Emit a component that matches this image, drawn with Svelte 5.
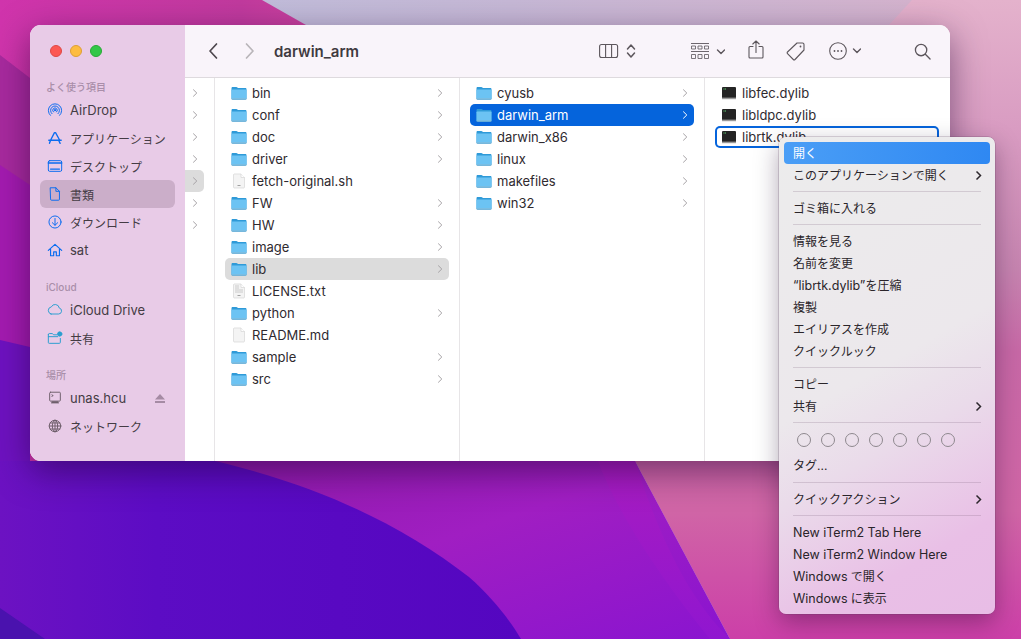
<script>
  const favs = [
    { label: 'AirDrop', icon: 'airdrop', lat: true },
    { label: 'アプリケーション', icon: 'apps' },
    { label: 'デスクトップ', icon: 'desktop' },
    { label: '書類', icon: 'doc', active: true },
    { label: 'ダウンロード', icon: 'download' },
    { label: 'sat', icon: 'home', lat: true }
  ];
  const col1 = [
    ['bin', 'f'], ['conf', 'f'], ['doc', 'f'], ['driver', 'f'], ['fetch-original.sh', 's'], ['FW', 'f'], ['HW', 'f'],
    ['image', 'f'], ['lib', 'f', 'sel'], ['LICENSE.txt', 't'], ['python', 'f'], ['README.md', 'd'], ['sample', 'f'], ['src', 'f']
  ];
  const col2 = [['cyusb', 'f'], ['darwin_arm', 'f', 'on'], ['darwin_x86', 'f'], ['linux', 'f'], ['makefiles', 'f'], ['win32', 'f']];
  const col3 = ['libfec.dylib', 'libldpc.dylib', 'librtk.dylib'];
  const sections = [
    [{ t: '開く', hi: true }, { t: 'このアプリケーションで開く', sub: true }],
    [{ t: 'ゴミ箱に入れる' }],
    [{ t: '情報を見る' }, { t: '名前を変更' }, { l: '“librtk.dylib”', t: 'を圧縮' }, { t: '複製' }, { t: 'エイリアスを作成' }, { t: 'クイックルック' }],
    [{ t: 'コピー' }, { t: '共有', sub: true }]
  ];
  const sections2 = [
    [{ t: 'クイックアクション', sub: true }],
    [{ l: 'New iTerm2 Tab Here' }, { l: 'New iTerm2 Window Here' }, { l: 'Windows', t: ' で開く' }, { l: 'Windows', t: ' に表示' }]
  ];
  const tags = [0, 1, 2, 3, 4, 5, 6];
  const stubs = [0, 1, 2, 3, 4, 5, 6];
</script>

{#snippet folder()}
  <svg class="ficon" viewBox="0 0 16 16"><path d="M.5 3.2c0-.7.5-1.2 1.2-1.2h3.6c.5 0 .8.2 1.1.5l.6.6h7.3c.7 0 1.2.5 1.2 1.2v9.2c0 .7-.5 1.2-1.2 1.2H1.7c-.7 0-1.2-.5-1.2-1.2z" fill="#2f9ad8"/><path d="M.5 5.2c0-.4.3-.7.7-.7h13.6c.4 0 .7.3.7.7v8.1c0 .7-.5 1.2-1.2 1.2H1.7c-.7 0-1.2-.5-1.2-1.2z" fill="#6cc3f3"/><path d="M.5 14h15" stroke="#8fb3c8" stroke-width=".8"/></svg>
{/snippet}

{#snippet sheet(kind)}
  <svg class="ficon" viewBox="0 0 16 16"><path d="M3 1h7l3.5 3.5V14a1 1 0 0 1-1 1h-9a1 1 0 0 1-1-1V2a1 1 0 0 1 .5-1z" fill="#f4f4f4" stroke="#d6d6d6" stroke-width=".7"/><path d="M10 1v3.5h3.5" fill="#fff" stroke="#d6d6d6" stroke-width=".7"/>{#if kind === 's' || kind === 't'}<path d="M6.5 12.5h3" stroke="#8c8c8c" stroke-width=".8"/>{/if}{#if kind === 't'}<path d="M4 3h4M4 5h4M4 7h8M4 9h8" stroke="#c2c2c2" stroke-width=".8"/>{/if}</svg>
{/snippet}

{#snippet exec()}
  <svg class="ficon" viewBox="0 0 16 16"><rect x="1" y="2" width="14" height="12" rx="1" fill="#242424"/><rect x="1" y="12.6" width="14" height="1.6" fill="#9a9a9a"/><path d="M2.5 4h3" stroke="#5fce72" stroke-width="1" stroke-dasharray="1 .5"/></svg>
{/snippet}

{#snippet chev()}
  <svg class="chev" viewBox="0 0 6 10"><path d="M1.2 1.5 4.8 5 1.2 8.5" fill="none" stroke="currentColor" stroke-width="1"/></svg>
{/snippet}

{#snippet side(name)}
  <svg class="sicon" viewBox="0 0 18 18" fill="none" stroke={name === 'cloud' || name === 'share' ? '#2b9fd0' : name === 'server' || name === 'net' ? '#6f5f6c' : '#0a6cf0'} stroke-width="1.1" stroke-linecap="round" stroke-linejoin="round">
    {#if name === 'airdrop'}
      <path d="M5.6 13.2a5 5 0 1 1 6.8 0M3.8 15a7.5 7.5 0 1 1 10.4 0M7.2 11.2a2.6 2.6 0 1 1 3.6 0"/><circle cx="9" cy="9.2" r=".8" fill="#0a6cf0"/>
    {:else if name === 'apps'}
      <path d="M9.6 3 14 11M8.4 3 4 11.5 2.8 15M2 11.5h14M13 11.5l1.8 3.5" stroke-width="1.5"/>
    {:else if name === 'desktop'}
      <rect x="1.5" y="3" width="15" height="12" rx="1.5"/><path d="M1.5 5.6h15" stroke-width="1.6"/><path d="M4 12.5h10" stroke-width="1.6"/>
    {:else if name === 'doc'}
      <path d="M4 2h6l4 4v9a1 1 0 0 1-1 1H5a1 1 0 0 1-1-1zM10 2v4h4"/>
    {:else if name === 'download'}
      <circle cx="9" cy="9" r="6.8"/><path d="M9 5v7.5M6 9.8l3 2.9 3-2.9"/>
    {:else if name === 'home'}
      <path d="M1.5 9.5 9 2.6l7.5 6.9M4 7.8V15.5h3.5v-4.4h3v4.4H14V7.8" stroke-width="1.3"/>
    {:else if name === 'cloud'}
      <path d="M5 14.5h8.5a3.4 3.4 0 0 0 .8-6.7 4.7 4.7 0 0 0-8.9-1.3A4.1 4.1 0 0 0 5 14.5z" transform="translate(-.5 -1)"/>
    {:else if name === 'share'}
      <path d="M1.5 5a1 1 0 0 1 1-1h3.6l1.2 1.4h4M1.5 7.5h10.5M1.5 5v9a1 1 0 0 0 1 1h11.5a1 1 0 0 0 1-1V9.5"/><circle cx="14.3" cy="4.5" r="2.4" fill="#2b9fd0"/>
    {:else if name === 'server'}
      <rect x="3" y="2.5" width="12" height="10" rx="1"/><path d="M5.5 5.5l1.5.8-1.5.8M5 14.5h8" /><path d="M6 13.6h6" stroke-width="2"/>
    {:else}
      <circle cx="9" cy="9" r="6.5"/><ellipse cx="9" cy="9" rx="3" ry="6.5"/><path d="M2.5 9h13M3.5 5.6h11M3.5 12.4h11M9 2.5v13"/>
    {/if}
  </svg>
{/snippet}

{#snippet item(m)}
  <div class="mi" class:hi={m.hi} class:plain={m.l && !m.t}>
    <span>{#if m.l}<span class="lat">{m.l}</span>{/if}{m.t ?? ''}</span>
    {#if m.sub}<svg class="sub" viewBox="0 0 7 11"><path d="M1.5 1.5 5.5 5.5l-4 4" fill="none" stroke="#2c272c" stroke-width="1.5"/></svg>{/if}
  </div>
{/snippet}

<main class="desktop">
  <svg class="wall" viewBox="0 0 1021 639" preserveAspectRatio="none">
    <defs>
      <linearGradient id="lav" x1="0" y1="0" x2="1" y2="0"><stop offset="0" stop-color="#bcc0de"/><stop offset=".5" stop-color="#c6b8d6"/><stop offset="1" stop-color="#d8b2cc"/></linearGradient>
      <linearGradient id="mag" x1="0" y1="0" x2="1" y2="0"><stop offset="0" stop-color="#d034ac"/><stop offset=".6" stop-color="#c13a9e"/><stop offset="1" stop-color="#d4489c"/></linearGradient>
      <linearGradient id="mid" x1="0" y1="0" x2="1" y2="1"><stop offset="0" stop-color="#8e1aa8"/><stop offset=".45" stop-color="#a01ec2"/><stop offset="1" stop-color="#8a14d0"/></linearGradient>
      <linearGradient id="deep" x1="0" y1="0" x2="1" y2="0"><stop offset="0" stop-color="#6c12c2"/><stop offset=".3" stop-color="#5c0cc4"/><stop offset="1" stop-color="#5406c0"/></linearGradient>
      <linearGradient id="strip" x1="0" y1="0" x2="0" y2="1"><stop offset="0" stop-color="#a81cc0"/><stop offset="1" stop-color="#9016d0"/></linearGradient>
      <linearGradient id="pink" x1="0" y1="0" x2="0" y2="1"><stop offset="0" stop-color="#e4b2cc"/><stop offset=".2" stop-color="#d99cc2"/><stop offset=".42" stop-color="#c684b0"/><stop offset=".55" stop-color="#c768a6"/><stop offset=".8" stop-color="#d065a6"/><stop offset="1" stop-color="#cc3fa8"/></linearGradient>
    </defs>
    <rect width="1021" height="639" fill="url(#lav)"/>
    <path d="M0 0H262L306 25 400 140V461H0z" fill="url(#mag)"/>
    <path d="M0 55 30 78V461H0z" fill="#a82a9e"/>
    <path d="M0 165 30 185V461H0z" fill="#a41bb0"/>
    <path d="M0 340 30 347V461H0z" fill="#6e12c0"/>
    <path d="M912 0 889 25 635 461 730 639H1021V0z" fill="url(#pink)"/>
    <path d="M200 461H635L730 639H500z" fill="url(#mid)"/>
    <path d="M598 461H635C660 540 690 600 730 639H710C670 590 620 520 598 461z" fill="url(#strip)"/>
    <path d="M0 461H215C325 487 404 527 469 577 490 595 510 620 521 639H0z" fill="url(#deep)"/>
    <path d="M0 608 45 639H0z" fill="#4a12ae"/>
  </svg>

  <div class="window">
    <aside class="sidebar">
      <div class="lights">
        <span class="dot r"></span><span class="dot y"></span><span class="dot g"></span>
      </div>
      <div class="slabel first">よく使う項目</div>
      {#each favs as f}
        <div class="sitem" class:active={f.active} class:latin={f.lat}>{@render side(f.icon)}<span>{f.label}</span></div>
      {/each}
      <div class="slabel">iCloud</div>
      <div class="sitem latin">{@render side('cloud')}<span>iCloud Drive</span></div>
      <div class="sitem">{@render side('share')}<span>共有</span></div>
      <div class="slabel">場所</div>
      <div class="sitem latin">{@render side('server')}<span>unas.hcu</span>
        <svg class="eject" viewBox="0 0 10 9"><path d="M5 0 10 5.5H0zM0 7h10v2H0z" fill="#a58ba4"/></svg>
      </div>
      <div class="sitem">{@render side('net')}<span>ネットワーク</span></div>
    </aside>

    <section class="content">
      <header class="toolbar">
        <svg class="nav" viewBox="0 0 12 18"><path d="M9.5 2 3 9l6.5 7" fill="none" stroke="#4d474d" stroke-width="1.7" stroke-linecap="round" stroke-linejoin="round"/></svg>
        <svg class="nav dim" viewBox="0 0 12 18"><path d="M2.5 2 9 9l-6.5 7" fill="none" stroke="#b9b5b9" stroke-width="1.7" stroke-linecap="round" stroke-linejoin="round"/></svg>
        <h1>darwin_arm</h1>
        <div class="tools">
          <svg class="view" viewBox="0 0 37 16" fill="none" stroke="#5c565c" stroke-width="1.1"><rect x=".6" y="1.5" width="18" height="13" rx="2"/><path d="M6.6 1.5v13M12.6 1.5v13"/><path d="M28.5 6l3.5-4 3.5 4M28.5 10l3.5 4 3.5-4" stroke-width="1.5" stroke-linecap="round" stroke-linejoin="round"/></svg>
          <svg class="group" viewBox="0 0 34 17" fill="none" stroke="#5c565c"><path d="M0 .5h18M0 8.5h18" stroke-width=".9"/><path d="M.5 3h4v3h-4zM7 3h4v3H7zM13.5 3h4v3h-4zM.5 11.5h4v4h-4zM7 11.5h4v4H7zM13.5 11.5h4v4h-4z" stroke-width=".8"/><path d="M26.5 7l3.500 3.500 3.500-3.500" stroke-width="1.4" stroke-linecap="round" stroke-linejoin="round"/></svg>
          <svg class="share" viewBox="0 0 16 19" fill="none" stroke="#5c565c" stroke-width="1.1" stroke-linecap="round" stroke-linejoin="round"><path d="M5 6.500H2a1 1 0 0 0-1 1V17a1 1 0 0 0 1 1h12a1 1 0 0 0 1-1V7.500a1 1 0 0 0-1-1h-3M8 12.500V1M4.800 4 8 1l3.200 3"/></svg>
          <svg class="tag" viewBox="0 0 20 20" fill="none" stroke="#5c565c" stroke-width="1.1" stroke-linejoin="round"><path d="M11 2h5.500A1.500 1.500 0 0 1 18 3.500V9l-9 9.500a1.200 1.200 0 0 1-1.700 0l-5.800-5.800a1.200 1.200 0 0 1 0-1.700z"/><circle cx="14.500" cy="5.500" r=".9" fill="#5c565c" stroke="none"/></svg>
          <svg class="more" viewBox="0 0 32 18" fill="none" stroke="#5c565c" stroke-width="1.1"><circle cx="9" cy="9" r="8.300"/><circle cx="5.500" cy="9" r=".9" fill="#5c565c" stroke="none"/><circle cx="9" cy="9" r=".9" fill="#5c565c" stroke="none"/><circle cx="12.500" cy="9" r=".9" fill="#5c565c" stroke="none"/><path d="M24.500 7l3.500 3.500L31.500 7" stroke-width="1.4" stroke-linecap="round" stroke-linejoin="round"/></svg>
          <svg class="search" viewBox="0 0 18 18" fill="none" stroke="#5c565c" stroke-width="1.4" stroke-linecap="round"><circle cx="7.500" cy="7.500" r="6"/><path d="M12 12l5 5"/></svg>
        </div>
      </header>

      <div class="columns">
        <div class="stub">
          {#each stubs as s}
            <div class="stubrow" class:hl={s === 4}>{@render chev()}</div>
          {/each}
        </div>
        <div class="col">
          {#each col1 as [name, kind, st]}
            <div class="row" class:sel={st === 'sel'}>
              {#if kind === 'f'}{@render folder()}{:else}{@render sheet(kind)}{/if}
              <span class="name">{name}</span>
              {#if kind === 'f'}{@render chev()}{/if}
            </div>
          {/each}
        </div>
        <div class="col">
          {#each col2 as [name, kind, st]}
            <div class="row" class:on={st === 'on'}>
              {@render folder()}
              <span class="name">{name}</span>
              {@render chev()}
            </div>
          {/each}
        </div>
        <div class="col last">
          {#each col3 as name, i}
            <div class="row" class:ring={i === 2}>
              {@render exec()}
              <span class="name">{name}</span>
            </div>
          {/each}
        </div>
      </div>
    </section>
  </div>

  <div class="menu">
    {#each sections as sec}
      {#each sec as m}{@render item(m)}{/each}
      <div class="sep"></div>
    {/each}
    <div class="tags">
      {#each tags as t}<span class="tagdot"></span>{/each}
    </div>
    {@render item({ t: 'タグ...' })}
    <div class="sep low"></div>
    {#each sections2 as sec, i}
      {#each sec as m}{@render item(m)}{/each}
      {#if i === 0}<div class="sep"></div>{/if}
    {/each}
  </div>
</main>

<style>
  :global(body) { margin: 0; background: #5a0cc0; }
  .desktop {
    position: relative; width: 1021px; height: 639px; overflow: hidden;
    font-family: "Inter", "Liberation Sans", "Noto Sans CJK JP", sans-serif;
    font-size: 13px; color: #2b262b;
  }
  .wall { position: absolute; inset: 0; width: 100%; height: 100%; }
  .window {
    position: absolute; left: 30px; top: 25px; width: 920px; height: 436px;
    display: flex; border-radius: 11px; overflow: hidden; background: #fff;
    box-shadow: 0 10px 34px rgba(30, 0, 50, .5);
  }
  .sidebar { width: 155px; flex: none; background: #e8cbe7; padding: 0 10px; box-sizing: border-box; }
  .lights { display: flex; gap: 8px; padding: 20px 0 0 10px; height: 12px; margin-bottom: 23px; }
  .dot { width: 12px; height: 12px; border-radius: 50%; box-sizing: border-box; }
  .r { background: #fc5753; border: .5px solid #df4744; }
  .y { background: #fdbc40; border: .5px solid #de9f34; }
  .g { background: #33c748; border: .5px solid #27aa35; }
  .slabel { font-size: 10px; font-weight: 500; color: #a98ea9; padding-left: 6px; height: 14px; line-height: 14px; margin-top: 16px; margin-bottom: 2px; }
  .slabel.first { margin-top: 0; }
  .sitem { display: flex; align-items: center; height: 28px; gap: 7px; padding-left: 7px; border-radius: 6px; color: #443c44; font-size: 12px; }
  .sitem.latin { font-size: 13px; }
  .sitem.active { background: #cbaec9; }
  .sitem .eject { width: 10px; height: 9px; margin-left: auto; margin-right: 10px; }
  .sicon { width: 16px; height: 16px; flex: none; }
  .content { flex: 1; display: flex; flex-direction: column; min-width: 0; }
  .toolbar { height: 53px; flex: none; display: flex; align-items: center; background: #f9f4fa; border-bottom: 1px solid #dedade; padding: 0 19px 0 22px; box-sizing: border-box; }
  .nav { width: 12px; height: 18px; margin-right: 25px; flex: none; }
  .nav.dim { margin-right: 18px; }
  .toolbar h1 { font-size: 15px; font-weight: 600; margin: 0; color: #3f3a3f; }
  .tools { margin-left: auto; display: flex; align-items: center; }
  .view { width: 37px; height: 16px; }
  .group { width: 34px; height: 17px; margin-left: 55px; }
  .share { width: 16px; height: 19px; margin-left: 23px; margin-top: -3px; }
  .tag { width: 20px; height: 20px; margin-left: 22px; }
  .more { width: 32px; height: 18px; margin-left: 23px; }
  .search { width: 17px; height: 17px; margin-left: 53px; }
  .columns { flex: 1; display: flex; min-height: 0; }
  .stub { width: 29px; flex: none; border-right: 1px solid #e7e5e7; padding-top: 4px; box-sizing: content-box; }
  .stubrow { height: 22px; width: 19px; display: flex; align-items: center; justify-content: center; color: #9b979b; }
  .stubrow.hl { background: #dcdcdc; border-radius: 0 5px 5px 0; }
  .col { width: 245px; flex: none; border-right: 1px solid #e7e5e7; padding: 4px 10px 0; box-sizing: border-box; }
  .col.last { flex: 1; border: none; padding-left: 10px; padding-right: 11px; }
  .row { height: 22px; display: flex; align-items: center; gap: 5px; padding: 0 6px; border-radius: 5px; color: #2f2a2f; box-sizing: border-box; }
  .name { flex: 1; white-space: nowrap; }
  .ficon { width: 16px; height: 16px; flex: none; }
  .chev { width: 6px; height: 10px; color: #a5a2a5; flex: none; }
  .row.sel { background: #dcdcdc; }
  .row.on { background: #0564dc; color: #fff; }
  .row.on .chev { color: #fff; }
  .row.ring { box-shadow: inset 0 0 0 2px #0564dc; }
  .menu {
    position: absolute; left: 779px; top: 137px; width: 216px; height: 477px; box-sizing: border-box;
    padding: 5px; border-radius: 7px;
    background: linear-gradient(150deg, #ececec 0%, #ece8ec 48%, #eadbea 62%, #e9bfe6 84%, #e8bde6 100%);
    box-shadow: 0 0 0 .5px rgba(90, 60, 90, .4), 0 8px 24px rgba(30, 0, 40, .35);
    font-size: 12px; color: #2a252a;
  }
  .mi { height: 22px; display: flex; align-items: center; justify-content: space-between; padding: 0 9px; border-radius: 4px; }
  .mi > span { position: relative; top: -1px; white-space: pre; }
  .mi.plain > span { top: 0; }
  .lat { font-size: 12.500px; }
  .mi.hi { background: linear-gradient(90deg, #4a9ef6, #2f88f2); color: #fff; }
  .sub { width: 7px; height: 11px; margin-right: -1px; }
  .sep { height: 1px; background: rgba(120, 90, 120, .22); margin: 5px 9px; }
  .sep.low { margin-top: 6px; }
  .tags { display: flex; gap: 10px; height: 26px; padding: 5px 13px 0; box-sizing: border-box; }
  .tagdot { width: 12px; height: 12px; border-radius: 50%; border: 1px solid #8e888e; }
</style>
